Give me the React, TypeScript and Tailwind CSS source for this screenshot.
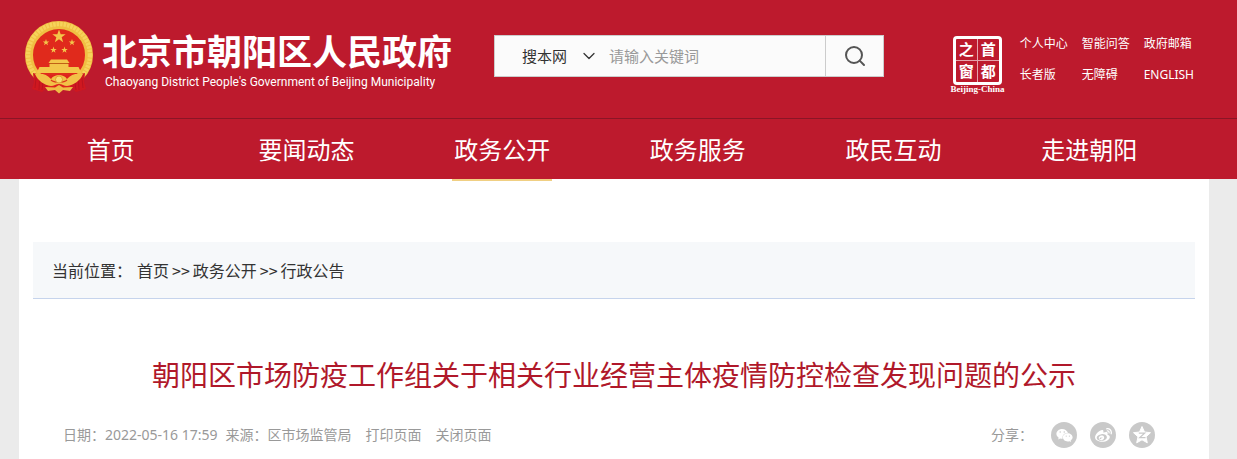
import { useState } from 'react';
import { ChevronDown, Search } from 'lucide-react';
import { FaWeibo, FaWeixin } from 'react-icons/fa';

const navItems = ['首页', '要闻动态', '政务公开', '政务服务', '政民互动', '走进朝阳'];

const topLinks = ['个人中心', '智能问答', '政府邮箱', '长者版', '无障碍', 'ENGLISH'];

const STAR = 'M0-10 2.4-3.2 9.5-3.1 3.8 1.2 5.9 8.1 0 4-5.9 8.1-3.8 1.2-9.5-3.1-2.4-3.2Z';

function Emblem() {
  return (
    <svg viewBox="0 0 70 74" className="h-[74px] w-[70px] shrink-0" aria-hidden="true">
      <circle cx="35" cy="35" r="26.5" fill="#e02a1c" />
      <circle cx="35" cy="35" r="30" fill="none" stroke="#f0bf42" strokeWidth="8" />
      <circle cx="35" cy="35" r="31" fill="none" stroke="#f6d35c" strokeWidth="4.500" strokeDasharray="2.500 1" />
      <g fill="#f3c64a">
        <path d={STAR} transform="translate(35 16.500) scale(.7)" />
        <path d={STAR} transform="translate(22 22.500) scale(.34)" />
        <path d={STAR} transform="translate(48 22.500) scale(.34)" />
        <path d={STAR} transform="translate(29.500 30) scale(.34)" />
        <path d={STAR} transform="translate(40.500 30) scale(.34)" />
        <path d="M27 39.500h16l2.500 3.500h-21Z" />
        <path d="M25.500 44h19v3h10l3 6H12.500l3-6h10Z" />
      </g>
      <path d="M26 43.500h18" stroke="#b87014" strokeWidth="0.8" />
      <path d="M12 55h46l-9 13H21Z" fill="#dd241c" />
      <path d="M9 53 17 55 24 66 18 72 8 69 10 62Z" fill="#cf1820" />
      <path d="M61 53 53 55 46 66 52 72 62 69 60 62Z" fill="#cf1820" />
      <path d="M12 58 11 68M15.500 60 15 70M19 63 18 70M58 58 59 68M54.500 60 55 70M51 63 52 70" stroke="#b5121e" strokeWidth="0.8" />
      <path d="M11 54c7-1 12 0 16 5 2-3 5-4 8-4s6 1 8 4c4-5 9-6 16-5-3 7-9 11-16 12-3 0-5-2-8-2s-5 2-8 2c-7-1-13-5-16-12Z" fill="#f2c147" />
      <path d="M27 60c3 3 13 3 16 0" stroke="#dd3a1c" strokeWidth="1.2" fill="none" />
      <circle cx="35" cy="59.500" r="3.500" fill="#f8dc70" stroke="#d89b27" strokeWidth="0.8" />
      <path d="M21 67 31 67.500 35 65 39 67.500 49 67 46 71 39 70 35 73.500 31 70 24 71Z" fill="#efbd45" />
    </svg>
  );
}

function QzoneIcon() {
  return (
    <svg viewBox="0 0 20 20" className="size-5" aria-hidden="true">
      <path
        d="M10 1.500 12.500 7 18.500 7.700 14 11.800 15.300 17.800 10 14.800 4.700 17.800 6 11.800 1.500 7.700 7.500 7Z"
        fill="white"
        stroke="white"
        strokeWidth="1"
        strokeLinejoin="round"
      />
      <path d="M6.800 8.200H12.600L7.800 12.600H13.500" fill="none" stroke="#c9c9c9" strokeWidth="1.300" />
    </svg>
  );
}

function CapitalSeal() {
  return (
    <a href="#" className="flex w-[56px] flex-col items-center text-white">
      <span className="grid size-[49px] grid-cols-2 grid-rows-2 rounded-sm border-[3px] border-white text-center text-[15px] leading-5 font-bold">
        <span className="border-r border-b border-white/60">之</span>
        <span className="border-b border-white/60">首</span>
        <span className="border-r border-white/60">窗</span>
        <span>都</span>
      </span>
      <span className="font-['Liberation_Serif',serif] text-[9px] leading-2 font-bold whitespace-nowrap">
        Beijing-China
      </span>
    </a>
  );
}

export default function App() {
  const [keyword, setKeyword] = useState('');

  return (
    <div className="flex min-h-screen flex-col bg-[#ebebeb] font-['Noto_Sans_CJK_SC',sans-serif]">
      <header className="bg-[#bd1a2d] text-white">
        <div className="mx-auto flex h-[118px] max-w-[1237px] items-start pr-[43px] pl-6">
          <a href="#" className="flex shrink-0 items-start gap-2 pt-5">
            <Emblem />
            <span className="flex w-[354px] flex-col pt-2">
              <span className="text-[35px] leading-[44px] font-bold whitespace-nowrap">北京市朝阳区人民政府</span>
              <span className="pl-[3px] font-['Roboto',sans-serif] text-xs leading-5 whitespace-nowrap">
                Chaoyang District People's Government of Beijing Municipality
              </span>
            </span>
          </a>

          <form
            onSubmit={(e) => e.preventDefault()}
            className="mt-[35px] ml-[38px] flex h-[42px] w-[390px] shrink-0 border border-[#ccc] bg-[#fbfbfb] text-[15px] text-[#333]"
          >
            <div className="relative flex w-[104px] items-center">
              <select aria-label="搜索范围" className="h-full w-full appearance-none bg-transparent pl-[27px] outline-none">
                <option>搜本网</option>
              </select>
              <ChevronDown className="pointer-events-none absolute right-0 size-5" strokeWidth={1.5} />
            </div>
            <input
              type="text"
              aria-label="关键词"
              placeholder="请输入关键词"
              value={keyword}
              onChange={(e) => setKeyword(e.target.value)}
              className="min-w-0 flex-1 bg-transparent pl-2.5 outline-none placeholder:text-[#999]"
            />
            <button type="submit" aria-label="搜索" className="flex w-[58px] items-center justify-center border-l border-[#ccc] text-[#555]">
              <Search className="size-6" />
            </button>
          </form>

          <div className="ml-auto flex items-start pt-9">
            <CapitalSeal />
            <nav className="ml-3.5 grid grid-cols-[62px_62px_auto] gap-y-[15px] font-['Noto_Sans','Noto_Sans_CJK_SC',sans-serif] text-xs">
              {topLinks.map((link) => (
                <a key={link} href="#" className="whitespace-nowrap">
                  {link}
                </a>
              ))}
            </nav>
          </div>
        </div>

        <nav className="border-t border-[#8a1526]">
          <ul className="mx-auto flex h-[60px] max-w-[1237px] pr-[50px] pl-[13px]">
            {navItems.map((item) => (
              <li key={item} className="relative flex-1 text-center text-2xl leading-[60px]">
                <a href="#">{item}</a>
                {item === '政务公开' && (
                  <span className="absolute top-full left-1/2 h-0.5 w-[100px] -translate-x-1/2 bg-[#f0cf83]" />
                )}
              </li>
            ))}
          </ul>
        </nav>
      </header>

      <div className="mx-auto flex w-full max-w-[1237px] flex-1 flex-col pr-7 pl-[19px]">
        <main className="flex-1 bg-white px-3.5 pt-[63px]">
          <div className="flex h-[57px] items-center border-b border-[#c6d4ec] bg-[#f6f8fa] pl-[19px] text-base text-[#333]">
            <span className="mr-[5px]">当前位置：</span>
            <a href="#">首页</a>
            <span className="px-[3px]">&gt;&gt;</span>
            <a href="#">政务公开</a>
            <span className="px-[3px]">&gt;&gt;</span>
            <a href="#">行政公告</a>
          </div>

          <h1 className="mt-[55px] text-center text-[28px] leading-10 text-[#b0182a]">
            朝阳区市场防疫工作组关于相关行业经营主体疫情防控检查发现问题的公示
          </h1>

          <div className="mt-7 flex items-center justify-between pr-10 pl-[30px] font-['Noto_Sans','Noto_Sans_CJK_SC',sans-serif] text-sm text-[#999]">
            <div className="flex whitespace-nowrap">
              <span className="mr-2">日期：2022-05-16 17:59</span>
              <span>来源：区市场监管局</span>
              <button type="button" className="ml-3.5">打印页面</button>
              <button type="button" className="ml-3.5">关闭页面</button>
            </div>
            <div className="flex items-center">
              <span className="mr-[18px]">分享：</span>
              <div className="flex gap-[13px]">
                <a href="#" aria-label="微信" className="flex size-[26px] items-center justify-center rounded-full bg-[#c9c9c9] text-white">
                  <FaWeixin className="size-[17px]" />
                </a>
                <a href="#" aria-label="微博" className="flex size-[26px] items-center justify-center rounded-full bg-[#c9c9c9] text-white">
                  <FaWeibo className="size-[17px]" />
                </a>
                <a href="#" aria-label="QQ空间" className="flex size-[26px] items-center justify-center rounded-full bg-[#c9c9c9] text-white">
                  <QzoneIcon />
                </a>
              </div>
            </div>
          </div>
        </main>
      </div>
    </div>
  );
}
